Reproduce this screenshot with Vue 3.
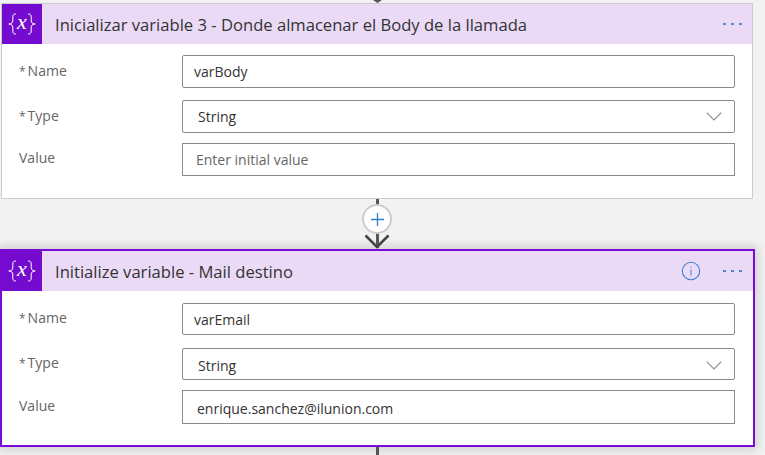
<script setup>
const cards = [
  {
    title: 'Inicializar variable 3 - Donde almacenar el Body de la llamada',
    selected: false,
    name: 'varBody',
    value: '',
  },
  {
    title: 'Initialize variable - Mail destino',
    selected: true,
    name: 'varEmail',
    value: 'enrique.sanchez@ilunion.com',
  },
]
</script>

<template>
  <div class="page">
    <div class="stub stub-top"><span class="tip"></span></div>
    <template v-for="(card, i) in cards" :key="card.title">
      <section class="card" :class="{ selected: card.selected }">
        <header class="head">
          <div class="logo">
            <svg width="40" height="40" viewBox="0 0 40 40">
              <path d="M14 10c-2.600 0-3.200 1-3.200 3v4c0 1.500-.9 2.500-4 3 3.100.5 4 1.500 4 3v4c0 2 .6 3 3.200 3M26 10c2.600 0 3.200 1 3.200 3v4c0 1.500.9 2.500 4 3-3.100.5-4 1.500-4 3v4c0 2-.6 3-3.200 3" fill="none" stroke="#fff" stroke-width="1" />
              <text x="20" y="25" text-anchor="middle" class="ex">x</text>
            </svg>
          </div>
          <h2 class="title">{{ card.title }}</h2>
          <svg v-if="card.selected" class="info" width="20" height="20" viewBox="0 0 20 20">
            <circle cx="10" cy="10" r="8.7" fill="none" stroke="#3f7fd0" stroke-width="1.1" />
            <rect x="9.5" y="8.6" width="1" height="6" fill="#3f7fd0" />
            <rect x="9.5" y="5.6" width="1" height="1.3" fill="#3f7fd0" />
          </svg>
          <div class="dots"><i></i><i></i><i></i></div>
        </header>
        <div class="form">
          <div class="row">
            <label class="label"><span class="star">*</span>Name</label>
            <div class="box name">{{ card.name }}</div>
          </div>
          <div class="row">
            <label class="label"><span class="star">*</span>Type</label>
            <div class="box select">
              <span>String</span>
              <svg width="16" height="9" viewBox="0 0 16 9">
                <path d="M.7.7 8 8 15.3.7" fill="none" stroke="#8a8a8a" stroke-width="1.1" />
              </svg>
            </div>
          </div>
          <div class="row">
            <label class="label">Value</label>
            <div class="box plain" :class="{ empty: !card.value }">{{ card.value || 'Enter initial value' }}</div>
          </div>
        </div>
      </section>
      <div v-if="i === 0" class="link">
        <span class="line"></span>
        <div class="plus">
          <svg width="13" height="13" viewBox="0 0 13 13">
            <path d="M6.5 0v13M0 6.5h13" stroke="#2f7fd1" stroke-width="1.3" fill="none" />
          </svg>
        </div>
        <svg class="arrow" width="26" height="15" viewBox="0 0 26 15">
          <path d="M1.5 1.5 13 13 24.500 1.500" fill="none" stroke="#444" stroke-width="2.6" />
        </svg>
      </div>
    </template>
    <div class="stub stub-bottom"></div>
  </div>
</template>

<style scoped>
.page {
  width: 765px;
  height: 455px;
  overflow: hidden;
  background: #f2f2f2;
  font-family: "Open Sans", "Noto Sans", sans-serif;
  color: #333;
  display: flex;
  flex-direction: column;
  align-items: flex-start;
}
.stub {
  width: 3px;
  background: #555;
  margin-left: 376px;
  flex: none;
}
.stub-top {
  height: 3px;
  background: none;
  position: relative;
}
.tip {
  position: absolute;
  left: -3px;
  top: 0;
  width: 9px;
  height: 3px;
  background: #555;
  clip-path: polygon(0 0, 100% 0, 50% 100%);
}
.stub-bottom {
  height: 8px;
}
.card {
  width: 752px;
  height: 196px;
  margin-left: 1px;
  box-sizing: border-box;
  background: #fff;
  border: 1px solid #ccc;
  flex: none;
}
.card.selected {
  width: 755px;
  height: 198px;
  margin-left: 0;
  border: 2px solid #7a0ad6;
  box-shadow: 0 0 9px 3px rgba(0, 0, 0, 0.14);
}
.head {
  height: 40px;
  display: flex;
  align-items: center;
  background: #ebdaf6;
}
.logo {
  width: 40px;
  height: 40px;
  background: #750bcf;
  flex: none;
}
.logo svg {
  display: block;
}
.ex {
  font-family: "Liberation Serif", serif;
  font-size: 22px;
  font-style: italic;
  fill: #fff;
}
.title {
  flex: 1;
  margin: 0 0 0 13px;
  font-size: 16.6px;
  font-weight: 400;
  color: #333;
  white-space: nowrap;
}
.info {
  flex: none;
  margin-right: 22px;
}
.dots {
  display: flex;
  gap: 5px;
  margin-right: 10px;
  flex: none;
}
.selected .dots {
  margin-right: 11px;
}
.dots i {
  width: 3px;
  height: 2px;
  background: #4a86d2;
}
.form {
  display: flex;
  flex-direction: column;
  padding: 11px 17px 0 17px;
}
.row {
  display: flex;
  align-items: flex-start;
}
.row:nth-child(1) {
  margin-bottom: 12px;
}
.row:nth-child(2) {
  margin-bottom: 10px;
}
.selected .form {
  padding: 12px 18px 0 17px;
}
.selected .row:nth-child(1) {
  margin-bottom: 13px;
}
.selected .row:nth-child(1) .box,
.selected .row:nth-child(2) .box {
  height: 32px;
}
.selected .row:nth-child(2) .box,
.selected .row:nth-child(3) .box {
  padding-top: 2px;
}
.selected .row:nth-child(3) .box {
  height: 34px;
}
.label {
  width: 163px;
  flex: none;
  font-size: 14px;
  line-height: 18px;
  padding-top: 7px;
  color: #666;
}
.row:nth-child(3) .label {
  padding-top: 6px;
}
.selected .label {
  padding-top: 6px;
}
.selected .row:nth-child(3) .label {
  padding-top: 7px;
}
.star {
  font-size: 12px;
  margin-right: 2px;
}
.box {
  flex: 1;
  height: 33px;
  box-sizing: border-box;
  border: 1px solid #8a8a8a;
  border-radius: 2px;
  padding: 0 14px;
  display: flex;
  align-items: center;
  font-size: 14px;
  color: #333;
}
.name {
  padding-left: 11px;
}
.select {
  justify-content: space-between;
  padding-left: 15px;
  padding-right: 12px;
}
.plain {
  border-radius: 0;
}
.empty {
  color: #666;
  padding-left: 13px;
}
.link {
  width: 754px;
  height: 50px;
  flex: none;
  display: flex;
  flex-direction: column;
  align-items: center;
  position: relative;
}
.line {
  position: absolute;
  left: 376px;
  top: 0;
  width: 3px;
  height: 49px;
  background: #555;
}
.plus {
  position: relative;
  margin-top: 5px;
  width: 30px;
  height: 30px;
  box-sizing: border-box;
  border: 2px solid #ccc;
  border-radius: 50%;
  background: #fff;
  display: flex;
  align-items: center;
  justify-content: center;
}
.arrow {
  position: absolute;
  left: 364px;
  top: 35px;
}
</style>

<style>
html, body { margin: 0; background: #f2f2f2; }
</style>
